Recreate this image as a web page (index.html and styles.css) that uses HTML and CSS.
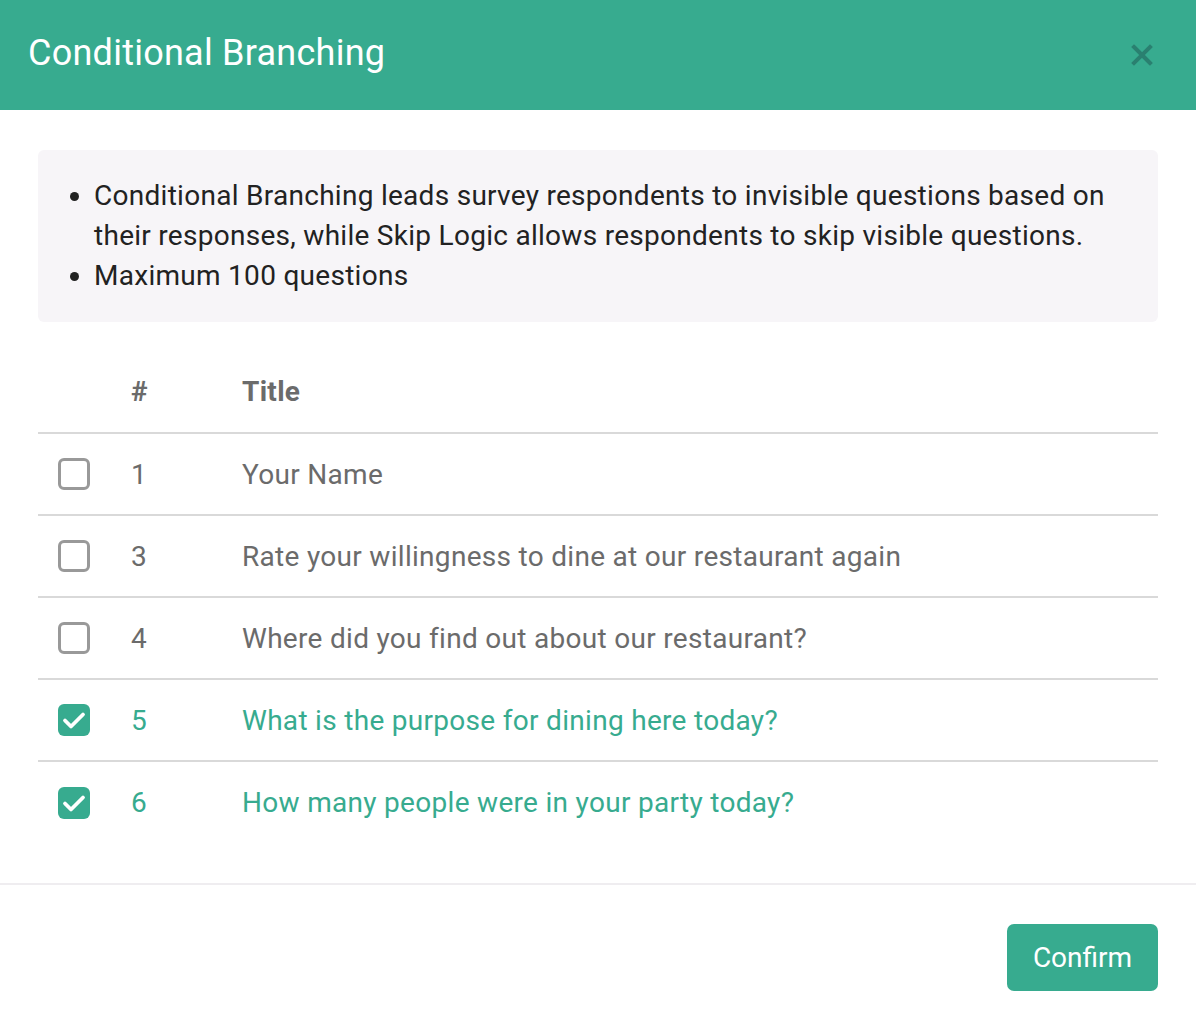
FILE: index.html
```html
<!DOCTYPE html>
<html lang="en">
<head>
<meta charset="utf-8">
<title>Conditional Branching</title>
<link rel="stylesheet" href="styles.css">
</head>
<body>
<div class="modal">
  <header class="modal-header">
    <h1 class="modal-title">Conditional Branching</h1>
    <button class="close-btn" aria-label="Close">
      <svg width="22" height="22" viewBox="0 0 22 22"><path d="M3 3 L19 19 M19 3 L3 19" stroke="currentColor" stroke-width="4" stroke-linecap="square"/></svg>
    </button>
  </header>
  <div class="modal-body">
    <ul class="info">
      <li>Conditional Branching leads survey respondents to invisible questions based on their responses, while Skip Logic allows respondents to skip visible questions.</li>
      <li>Maximum 100 questions</li>
    </ul>
    <table class="questions">
      <thead>
        <tr><th class="col-check"></th><th class="col-num">#</th><th>Title</th></tr>
      </thead>
      <tbody>
        <tr><td class="col-check"><span class="cb"></span></td><td class="col-num">1</td><td>Your Name</td></tr>
        <tr><td class="col-check"><span class="cb"></span></td><td class="col-num">3</td><td>Rate your willingness to dine at our restaurant again</td></tr>
        <tr><td class="col-check"><span class="cb"></span></td><td class="col-num">4</td><td>Where did you find out about our restaurant?</td></tr>
        <tr class="selected"><td class="col-check"><span class="cb checked"><svg viewBox="0 0 32 32" width="32" height="32"><path d="M7 16.5 L13 22.5 L25 10.5" fill="none" stroke="#fff" stroke-width="3.8" stroke-linecap="round" stroke-linejoin="round"/></svg></span></td><td class="col-num">5</td><td>What is the purpose for dining here today?</td></tr>
        <tr class="selected"><td class="col-check"><span class="cb checked"><svg viewBox="0 0 32 32" width="32" height="32"><path d="M7 16.5 L13 22.5 L25 10.5" fill="none" stroke="#fff" stroke-width="3.8" stroke-linecap="round" stroke-linejoin="round"/></svg></span></td><td class="col-num">6</td><td>How many people were in your party today?</td></tr>
      </tbody>
    </table>
  </div>
  <footer class="modal-footer">
    <button class="confirm">Confirm</button>
  </footer>
</div>
</body>
</html>
```

FILE: styles.css
```css
* { box-sizing: border-box; }

html, body {
  margin: 0;
  padding: 0;
  background: #fff;
  font-family: Roboto, "Noto Sans", Arial, sans-serif;
}

.modal {
  width: 1196px;
  min-height: 1026px;
  background: #fff;
}

.modal-header {
  height: 110px;
  background: #37ab8f;
  display: flex;
  align-items: center;
  justify-content: space-between;
  padding: 0 43px 0 28px;
}

.modal-title {
  margin: 0;
  color: #fff;
  font-weight: 400;
  font-size: 36px;
  letter-spacing: 0.25px;
  position: relative;
  top: -2px;
}

.close-btn {
  border: 0;
  background: none;
  padding: 0;
  color: #2a8070;
  display: flex;
  cursor: pointer;
}

.modal-body {
  padding: 40px 38px 40px;
}

.info {
  margin: 0;
  background: #f7f5f8;
  border-radius: 6px;
  padding: 26px 40px 26px 56px;
  list-style: disc;
  color: #222;
  font-size: 28px;
  letter-spacing: 0.28px;
  line-height: 40px;
}

.questions {
  width: 100%;
  border-collapse: collapse;
  margin-top: 29px;
  font-size: 28px;
  letter-spacing: 0.3px;
  color: #6b6b6b;
}

.questions th,
.questions td {
  height: 82px;
  padding: 0;
  text-align: left;
  vertical-align: middle;
}

.questions th {
  font-weight: 700;
  color: #6b6b6b;
  border-bottom: 2px solid #d9d9d9;
}

.questions tbody tr + tr td {
  border-top: 2px solid #d9d9d9;
}

.col-check {
  width: 93px;
  padding-left: 20px !important;
}

.col-num {
  width: 111px;
}

.questions tr.selected td { color: #37ab8f; }

.cb {
  display: block;
  width: 32px;
  height: 32px;
  border: 3px solid #999;
  border-radius: 6px;
}

.cb.checked {
  border: 0;
  background: #37ab8f;
}

.cb svg { display: block; }

.modal-footer {
  border-top: 2px solid #efedf0;
  display: flex;
  justify-content: flex-end;
  padding: 39px 38px 0;
}

.confirm {
  width: 151px;
  height: 67px;
  border: 0;
  border-radius: 7px;
  background: #37ab8f;
  color: #fff;
  font-family: Roboto, "Noto Sans", Arial, sans-serif;
  font-size: 28px;
  cursor: pointer;
}
```
